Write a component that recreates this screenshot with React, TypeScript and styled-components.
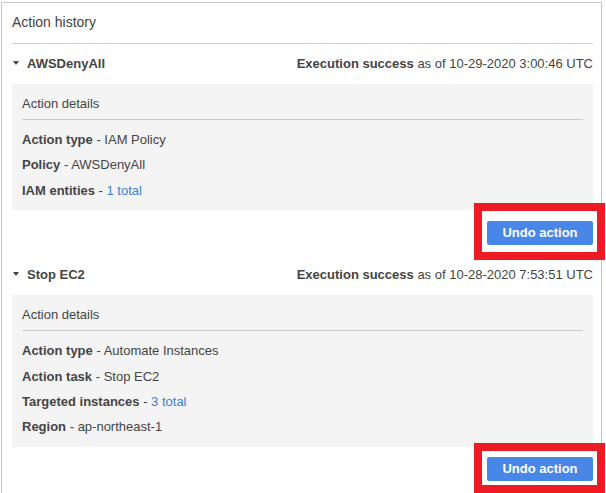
import React from 'react';
import styled, { createGlobalStyle } from 'styled-components';

const GlobalStyle = createGlobalStyle`
  body {
    margin: 0;
    overflow: hidden;
    background: #fff;
    font-family: 'Liberation Sans', Arial, sans-serif;
    color: #444;
  }
`;

const Container = styled.div`
  box-sizing: border-box;
  width: 601px;
  margin: 2px 0 0 1px;
  padding: 0 8px 12px 10px;
  border: 1px solid #c9c9c9;
  border-bottom: none;
`;

const Title = styled.div`
  font-size: 14px;
  line-height: 20px;
  padding: 9px 0 11px;
  border-bottom: 1px solid #cfcfcf;
`;

const Section = styled.div<{ $first?: boolean }>`
  margin-top: ${({ $first }) => ($first ? '9px' : '19px')};
`;

const Heading = styled.div`
  display: flex;
  justify-content: space-between;
  align-items: center;
  height: 20px;
  font-size: 13px;
`;

const HeadingName = styled.div`
  display: flex;
  align-items: center;
  padding-left: 1px;
  font-weight: bold;
`;

const Caret = styled.span`
  width: 0;
  height: 0;
  margin-right: 8px;
  border-left: 3.5px solid transparent;
  border-right: 3.5px solid transparent;
  border-top: 4px solid #444;
`;

const Status = styled.div`
  b {
    font-weight: bold;
  }
`;

const Details = styled.div`
  margin-top: 11px;
  padding: 11px 10px 7px;
  background: #f4f4f4;
`;

const DetailsTitle = styled.div`
  font-size: 13px;
  line-height: 18px;
  padding-bottom: 6px;
  border-bottom: 1px solid #cbcbcb;
`;

const Rows = styled.div`
  padding-top: 7px;
`;

const Row = styled.div`
  font-size: 13px;
  line-height: 25.4px;

  b {
    font-weight: bold;
  }
`;

const Link = styled.a`
  color: #3a7fdb;
  text-decoration: none;
  cursor: pointer;
`;

const ButtonRow = styled.div<{ $gap: number }>`
  display: flex;
  justify-content: flex-end;
  margin-top: ${({ $gap }) => $gap}px;
`;

const ButtonWrap = styled.div`
  position: relative;
`;

const UndoButton = styled.button`
  display: block;
  height: 24px;
  padding: 0 15px 1px;
  width: 106px;
  border: none;
  border-radius: 2px;
  background: #4886e8;
  color: #fff;
  font-family: 'Liberation Sans', Arial, sans-serif;
  font-size: 13px;
  font-weight: bold;
  cursor: pointer;
`;

// red annotation frame drawn around the button in the screenshot
const Highlight = styled.div<{ $top: number; $bottom: number }>`
  position: absolute;
  top: ${({ $top }) => $top}px;
  bottom: ${({ $bottom }) => $bottom}px;
  left: -13px;
  right: -12px;
  border: 8px solid #ed1c24;
  pointer-events: none;
`;

type Detail = { label: string; value: string; link?: boolean };

type Action = {
  name: string;
  date: string;
  details: Detail[];
  buttonGap: number;
  frame: { top: number; bottom: number };
};

const actions: Action[] = [
  {
    name: 'AWSDenyAll',
    date: '10-29-2020 3:00:46 UTC',
    details: [
      { label: 'Action type', value: 'IAM Policy' },
      { label: 'Policy', value: 'AWSDenyAll' },
      { label: 'IAM entities', value: '1 total', link: true },
    ],
    buttonGap: 11,
    frame: { top: -18, bottom: -15 },
  },
  {
    name: 'Stop EC2',
    date: '10-28-2020 7:53:51 UTC',
    details: [
      { label: 'Action type', value: 'Automate Instances' },
      { label: 'Action task', value: 'Stop EC2' },
      { label: 'Targeted instances', value: '3 total', link: true },
      { label: 'Region', value: 'ap-northeast-1' },
    ],
    buttonGap: 10,
    frame: { top: -14, bottom: -12 },
  },
];

export default function App() {
  return (
    <>
      <GlobalStyle />
      <Container>
        <Title>Action history</Title>
        {actions.map((action, i) => (
          <Section key={action.name} $first={i === 0}>
            <Heading>
              <HeadingName>
                <Caret />
                {action.name}
              </HeadingName>
              <Status>
                <b>Execution success</b> as of {action.date}
              </Status>
            </Heading>
            <Details>
              <DetailsTitle>Action details</DetailsTitle>
              <Rows>
                {action.details.map(({ label, value, link }) => (
                  <Row key={label}>
                    <b>{label}</b> - {link ? <Link>{value}</Link> : value}
                  </Row>
                ))}
              </Rows>
            </Details>
            <ButtonRow $gap={action.buttonGap}>
              <ButtonWrap>
                <UndoButton>Undo action</UndoButton>
                <Highlight $top={action.frame.top} $bottom={action.frame.bottom} />
              </ButtonWrap>
            </ButtonRow>
          </Section>
        ))}
      </Container>
    </>
  );
}
